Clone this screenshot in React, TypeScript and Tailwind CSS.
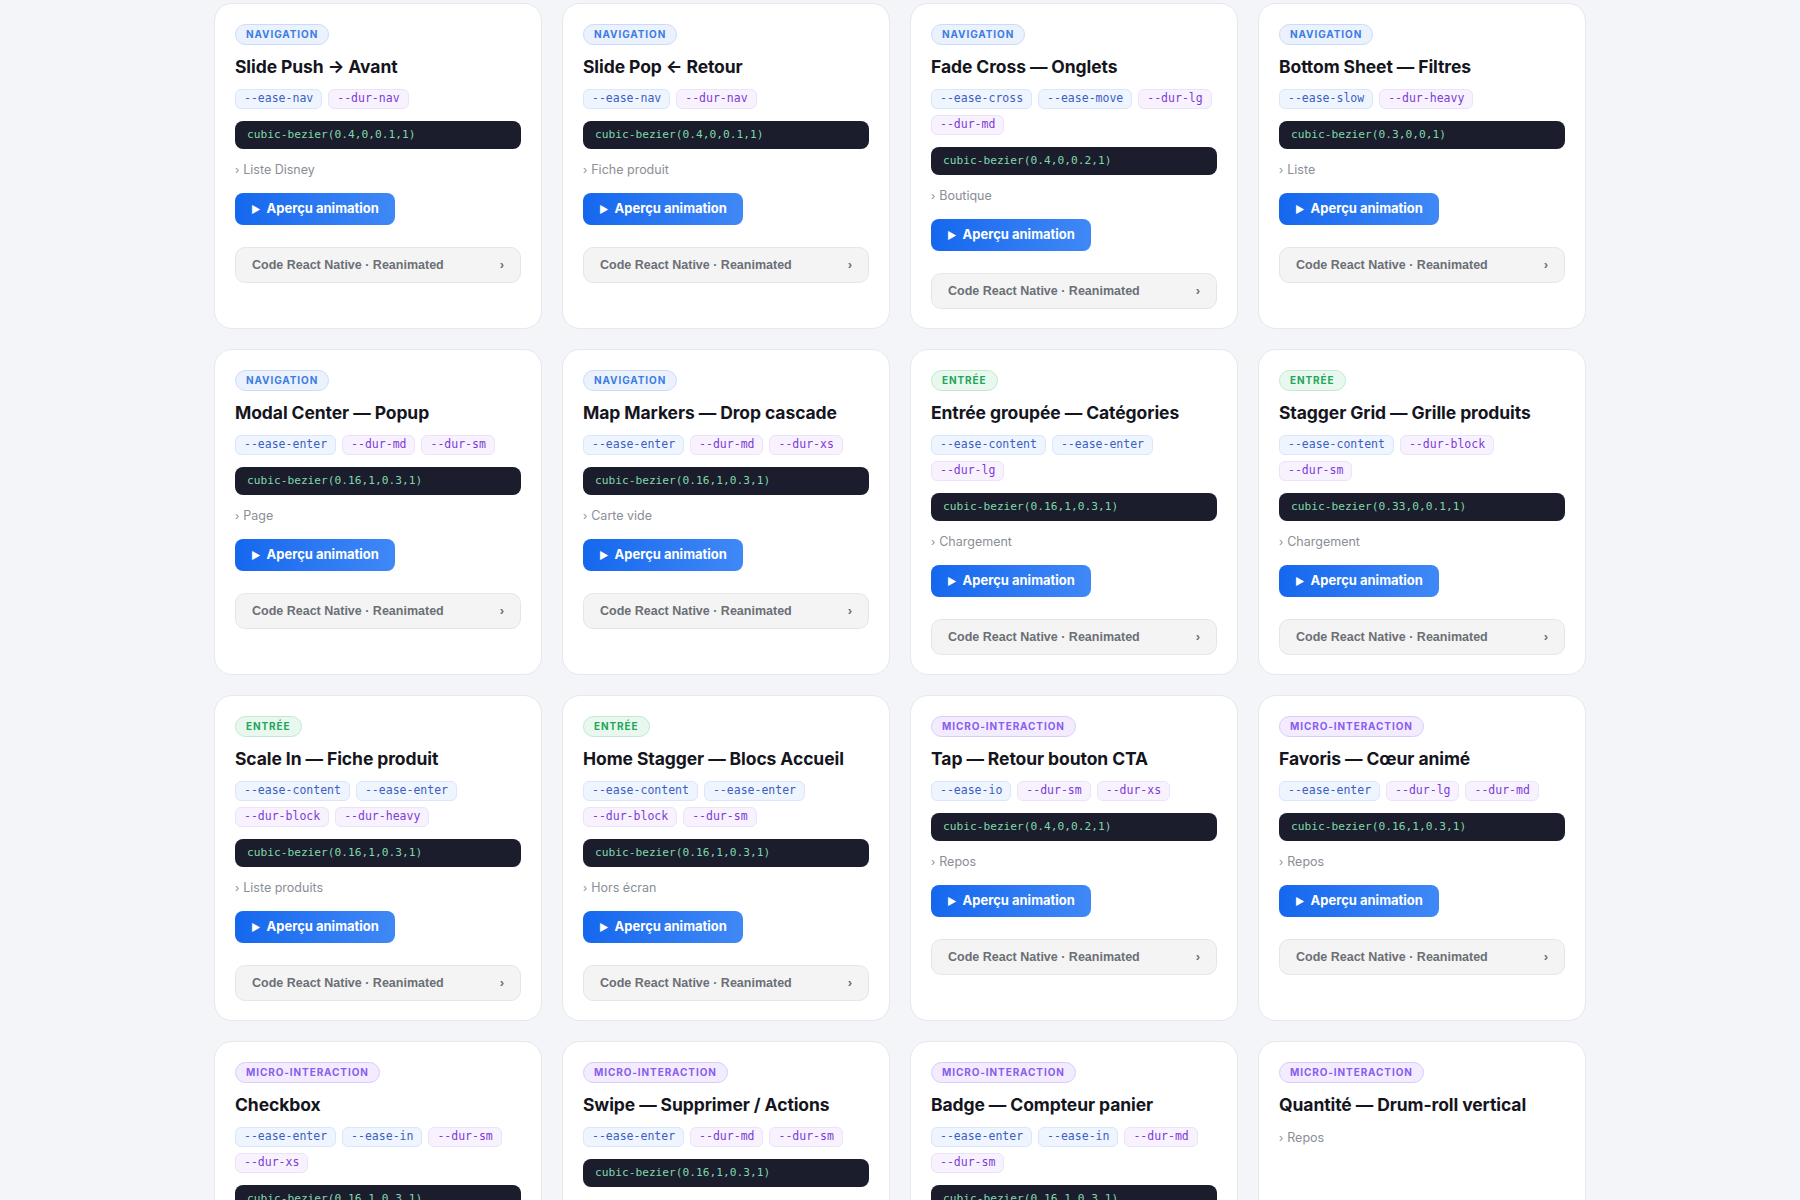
type Kind = "nav" | "enter" | "micro";

type Card = {
  kind: Kind;
  title: string;
  tags: string[];
  curve?: string;
  hint: string;
  actions?: boolean;
};

const cards: Card[] = [
  { kind: "nav", title: "Slide Push → Avant", tags: ["--ease-nav", "--dur-nav"], curve: "cubic-bezier(0.4,0,0.1,1)", hint: "Liste Disney" },
  { kind: "nav", title: "Slide Pop ← Retour", tags: ["--ease-nav", "--dur-nav"], curve: "cubic-bezier(0.4,0,0.1,1)", hint: "Fiche produit" },
  { kind: "nav", title: "Fade Cross — Onglets", tags: ["--ease-cross", "--ease-move", "--dur-lg", "--dur-md"], curve: "cubic-bezier(0.4,0,0.2,1)", hint: "Boutique" },
  { kind: "nav", title: "Bottom Sheet — Filtres", tags: ["--ease-slow", "--dur-heavy"], curve: "cubic-bezier(0.3,0,0,1)", hint: "Liste" },
  { kind: "nav", title: "Modal Center — Popup", tags: ["--ease-enter", "--dur-md", "--dur-sm"], curve: "cubic-bezier(0.16,1,0.3,1)", hint: "Page" },
  { kind: "nav", title: "Map Markers — Drop cascade", tags: ["--ease-enter", "--dur-md", "--dur-xs"], curve: "cubic-bezier(0.16,1,0.3,1)", hint: "Carte vide" },
  { kind: "enter", title: "Entrée groupée — Catégories", tags: ["--ease-content", "--ease-enter", "--dur-lg"], curve: "cubic-bezier(0.16,1,0.3,1)", hint: "Chargement" },
  { kind: "enter", title: "Stagger Grid — Grille produits", tags: ["--ease-content", "--dur-block", "--dur-sm"], curve: "cubic-bezier(0.33,0,0.1,1)", hint: "Chargement" },
  { kind: "enter", title: "Scale In — Fiche produit", tags: ["--ease-content", "--ease-enter", "--dur-block", "--dur-heavy"], curve: "cubic-bezier(0.16,1,0.3,1)", hint: "Liste produits" },
  { kind: "enter", title: "Home Stagger — Blocs Accueil", tags: ["--ease-content", "--ease-enter", "--dur-block", "--dur-sm"], curve: "cubic-bezier(0.16,1,0.3,1)", hint: "Hors écran" },
  { kind: "micro", title: "Tap — Retour bouton CTA", tags: ["--ease-io", "--dur-sm", "--dur-xs"], curve: "cubic-bezier(0.4,0,0.2,1)", hint: "Repos" },
  { kind: "micro", title: "Favoris — Cœur animé", tags: ["--ease-enter", "--dur-lg", "--dur-md"], curve: "cubic-bezier(0.16,1,0.3,1)", hint: "Repos" },
  { kind: "micro", title: "Checkbox", tags: ["--ease-enter", "--ease-in", "--dur-sm", "--dur-xs"], curve: "cubic-bezier(0.16,1,0.3,1)", hint: "Non coché" },
  { kind: "micro", title: "Swipe — Supprimer / Actions", tags: ["--ease-enter", "--dur-md", "--dur-sm"], curve: "cubic-bezier(0.16,1,0.3,1)", hint: "Repos" },
  { kind: "micro", title: "Badge — Compteur panier", tags: ["--ease-enter", "--ease-in", "--dur-md", "--dur-sm"], curve: "cubic-bezier(0.16,1,0.3,1)", hint: "Vide" },
  { kind: "micro", title: "Quantité — Drum-roll vertical", tags: [], hint: "Repos", actions: false },
];

const badge: Record<Kind, { label: string; cls: string }> = {
  nav: { label: "Navigation", cls: "bg-[#ebf2fe] border-[#c9dbf8] text-[#3b7de2]" },
  enter: { label: "Entrée", cls: "bg-[#e9f8ef] border-[#c0eacf] text-[#23a65a]" },
  micro: { label: "Micro-interaction", cls: "bg-[#f2ecfe] border-[#dacbf8] text-[#8a5cf0]" },
};

const sans = "font-['Inter','Noto_Sans',sans-serif]";
const mono = "font-['DejaVu_Sans_Mono','Liberation_Mono',monospace]";

function Tag({ name }: { name: string }) {
  const dur = name.startsWith("--dur");
  return (
    <span
      className={`${mono} flex h-5 items-center rounded-md border px-2 text-[11.5px] ${
        dur ? "border-[#ece3fb] bg-[#f7f2fe] text-[#7d3bd8]" : "border-[#d9e6fb] bg-[#eff5fe] text-[#3a5ec4]"
      }`}
    >
      {name}
    </span>
  );
}

function AnimCard({ card }: { card: Card }) {
  const b = badge[card.kind];
  return (
    <div className={`${sans} rounded-[18px] border border-[#e6e8ec] bg-white px-5 pt-5 pb-[19px]`}>
      <div
        className={`flex h-[21px] w-fit items-center rounded-full border px-[10px] text-[10px] font-bold uppercase tracking-[0.09em] ${b.cls}`}
      >
        {b.label}
      </div>
      <h3 className="mt-[10px] text-[17.5px] leading-6 font-bold tracking-[-0.005em] text-[#15151d]">{card.title}</h3>
      {card.tags.length > 0 && (
        <div className="mt-[10px] flex flex-wrap gap-[6px]">
          {card.tags.map((t) => (
            <Tag key={t} name={t} />
          ))}
        </div>
      )}
      {card.curve && (
        <div className={`${mono} mt-3 flex h-7 items-center rounded-lg bg-[#1b1c2c] px-3 text-[11.2px] text-[#7fd8aa]`}>
          {card.curve}
        </div>
      )}
      <p className="mt-3 text-[12.5px] leading-[18px] text-[#8a8e96]">
        <span className="mr-1 text-[11px]">›</span>
        {card.hint}
      </p>
      {card.actions !== false && (
        <>
          <button className="mt-[14px] flex h-8 items-center gap-[6px] rounded-lg bg-gradient-to-r from-[#1467ee] to-[#3f88f6] px-4 text-[13px] font-bold text-white">
            <span className="text-[10px]">▶</span>
            Aperçu animation
          </button>
          <button className="mt-[22px] flex h-9 w-full items-center justify-between rounded-[10px] border border-[#e4e6ea] bg-[#f4f4f5] px-4 font-['Liberation_Sans',Arial,sans-serif] text-[12.5px] font-bold text-[#6b6f76]">
            <span>Code React Native · Reanimated</span>
            <span className="text-[13px]">›</span>
          </button>
        </>
      )}
    </div>
  );
}

export default function App() {
  return (
    <div className="min-h-screen bg-[#f3f5f9] pt-[3px] pb-10">
      <div className="mx-auto grid max-w-[1372px] grid-cols-4 gap-5">
        {cards.map((c) => (
          <AnimCard key={c.title} card={c} />
        ))}
      </div>
    </div>
  );
}
